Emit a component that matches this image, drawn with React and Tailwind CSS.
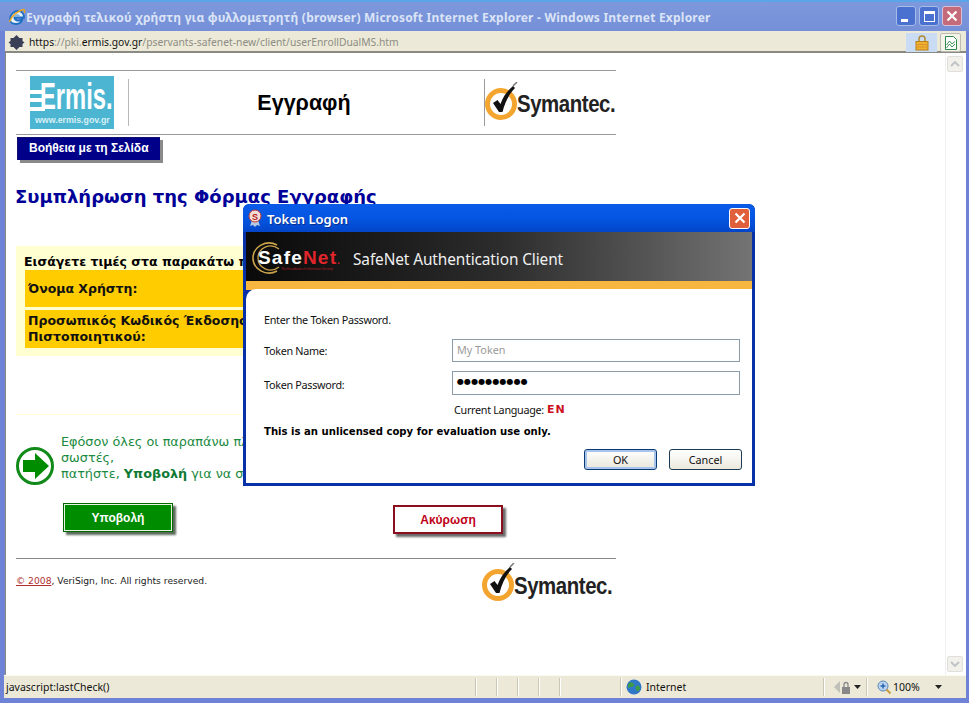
import React from "react";

const ui = { fontFamily: '"Noto Sans", "Liberation Sans", sans-serif' };
const arial = { fontFamily: '"Liberation Sans", Arial, sans-serif' };
const dejavu = { fontFamily: '"DejaVu Sans", Verdana, sans-serif' };

function IeIcon() {
  return (
    <svg width="18" height="18" viewBox="0 0 18 18" fill="none">
      <path d="M2 11.500C2 6 6.500 3 10 3c3.500 0 6 2.500 6 6.500H6.500c0 3 4.500 4.500 8 1.500-1 3.500-4 5-6.500 5-3.500 0-6-2-6-4.500Z" fill="#e8f2fb" stroke="#1f6fc4" strokeWidth="1.800" />
      <path d="M6.500 8h5.500c-.3-2.500-5-2.500-5.500 0Z" fill="#7cb3e6" />
      <path d="M1.500 14C3 8 10 2.500 15.500 1.500c1.500.2 1.500 2 .8 3.500" stroke="#e6a520" strokeWidth="1.400" />
    </svg>
  );
}

function Symantec() {
  return (
    <div className="flex items-center w-[131px] h-[38px] overflow-hidden" style={arial}>
      <svg width="38" height="38" viewBox="0 0 38 38" fill="none" className="shrink-0">
        <circle cx="16" cy="22" r="13.500" fill="#fff" stroke="#f4a52f" strokeWidth="5" />
        <path d="M8 21l4.500-3 3 4C18 15 22 9 28 4l2 2C24 12 20 20 17.500 30h-3.500Z" fill="#111" />
        <path d="M28 4l4-4" stroke="#777" strokeWidth="1.500" />
      </svg>
      <span className="-ml-[6px] mt-[7px] -tracking-[0.5px] font-bold text-[#222] whitespace-nowrap text-[24px] leading-none origin-left scale-x-[0.85]">
        Symantec.
      </span>
    </div>
  );
}

function ErmisLogo() {
  return (
    <div className="relative w-[84px] h-[53px] bg-[#4cb6d2] overflow-hidden text-white" style={arial}>
      <span className="absolute left-[10px] top-[7px] text-[36px] leading-[28px] font-bold origin-left scale-x-[0.66]">Ermis.</span>
      <span className="absolute left-0 top-[14px] w-[15px] h-[4px] bg-white" />
      <span className="absolute left-0 top-[22px] w-[15px] h-[4px] bg-white" />
      <span className="absolute left-0 top-[31px] w-[15px] h-[4px] bg-white" />
      <span className="absolute left-[5px] top-[38px] text-[8.800px] leading-[12px] font-bold whitespace-nowrap text-[#d6f0f6]">www.ermis.gov.gr</span>
    </div>
  );
}

function SafeNetLogo() {
  return (
    <div className="relative w-[90px] h-[36px]" style={arial}>
      <svg width="36" height="36" viewBox="0 0 36 36" fill="none" className="absolute left-0 top-0">
        <path d="M26 5C15 -1 2 7 2 18c0 11 13 19 24 13" stroke="#c9a24a" strokeWidth="1.600" />
        <path d="M28 9C19 2 7 8 7 18c0 10 12 16 21 9" stroke="#c9a24a" strokeWidth="1.300" />
      </svg>
      <span className="absolute left-[7px] top-[8px] text-[19px] leading-[20px] font-bold text-white whitespace-nowrap tracking-[1.200px]">Safe<span className="text-[#e0262c]">Net</span><span className="text-[9px] text-[#e0262c]">.</span></span>
      <span className="absolute left-[30px] top-[27px] text-[3px] leading-[4px] text-[#b02028] whitespace-nowrap">The Foundation of Information Security</span>
    </div>
  );
}

function Dialog() {
  return (
    <div className="absolute left-[243px] top-[151px] w-[512px] h-[282px] flex flex-col rounded-t-[6px] bg-[#0831a8] px-[3px] pb-[3px] overflow-hidden" style={ui}>
      <div className="h-[28px] -mx-[3px] px-[5px] flex items-center rounded-t-[6px] bg-gradient-to-b from-[#0a5be8] via-[#0456e2] to-[#0345c8] shrink-0">
        <svg width="14" height="18" viewBox="0 0 14 18" fill="none" className="mr-[5px]">
          <path d="M4 11l-2 6 3-1 2 2 2-2 3 1-2-6Z" fill="#b6c8e0" />
          <circle cx="7" cy="7" r="6" fill="#f2dcd6" stroke="#c2392e" />
          <text x="7" y="10.500" fontSize="9" fontWeight="700" fill="#b4231c" textAnchor="middle" style={arial}>S</text>
        </svg>
        <span className="pt-[3px] text-[13px] font-semibold text-white [text-shadow:1px_1px_0_#0a2f90]">Token Logon</span>
        <div className="ml-auto w-[21px] h-[21px] rounded-[3px] bg-[#e0603c] border border-white flex items-center justify-center">
          <svg width="12" height="12" viewBox="0 0 12 12"><path d="M1.500 1.500l9 9M10.500 1.500l-9 9" stroke="#fff" strokeWidth="2.200" /></svg>
        </div>
      </div>
      <div className="h-[49px] shrink-0 flex items-center pl-[5px] pt-[2px] bg-gradient-to-r from-[#0a0a0a] via-[#2c2c2c] to-[#747474]">
        <SafeNetLogo />
        <span className="ml-[12px] pt-[4px] text-[15.400px] text-[#f0f0f0] whitespace-nowrap -tracking-[0.1px]">SafeNet Authentication Client</span>
      </div>
      <div className="h-[9px] shrink-0 bg-[#f6b63f]" />
      <div className="flex-1 bg-white -mt-[1px] rounded-tl-[10px] pl-[18px] pr-[9px] relative text-[10.800px] text-[#111]">
        <div className="mt-[23px] leading-[16px] -tracking-[0.3px]">Enter the Token Password.</div>
        <div className="mt-[11px] flex items-center h-[23px]">
          <span className="w-[188px] -tracking-[0.3px] pt-[2px]">Token Name:</span>
          <div className="w-[288px] h-[23px] border border-[#8c9ba8] pl-[4px] text-[#9a9a9a] leading-[19px]">My Token</div>
        </div>
        <div className="mt-[9px] flex items-center h-[24px]">
          <span className="w-[188px] -tracking-[0.3px] pt-[4px]">Token Password:</span>
          <div className="w-[288px] h-[24px] border border-[#8c9ba8] pl-[4px] text-black text-[8px] leading-[20px] tracking-[0.1px] font-bold" style={dejavu}>●●●●●●●●●●</div>
        </div>
        <div className="mt-[7px] ml-[190px] h-[17px] flex items-center -tracking-[0.3px]">
          Current Language:
          <span className="ml-[3px] text-[11px] font-bold text-[#cc1122] tracking-[1px]" style={dejavu}>EN</span>
        </div>
        <div className="mt-[5px] text-[10.100px] font-bold text-black leading-[16px]" style={dejavu}>
          This is an unlicensed copy for evaluation use only.
        </div>
        <div className="mt-[9px] flex justify-end gap-[12px] mr-[1px]">
          <div className="w-[73px] h-[21px] rounded-[3px] border border-[#0a3a72] bg-gradient-to-b from-white to-[#e8e6da] shadow-[inset_0_0_0_2px_#a8c4ec] flex items-center justify-center pt-[1px]">OK</div>
          <div className="w-[73px] h-[21px] rounded-[3px] border border-[#1c3a52] bg-gradient-to-b from-white to-[#ebe9dd] flex items-center justify-center pt-[1px]">Cancel</div>
        </div>
      </div>
    </div>
  );
}

function PageContent() {
  return (
    <div className="w-[600px] ml-[10px] pt-[17px]">
      <div className="border-t border-b border-[#9a9a9a] h-[65px] flex items-center">
        <div className="ml-[14px] shrink-0"><ErmisLogo /></div>
        <div className="ml-[14px] h-[47px] w-px bg-[#b8b8b8] shrink-0" />
        <div className="w-[355px] shrink-0 text-center pr-[5px] text-[21.500px] font-bold text-black leading-[26px]" style={arial}>Εγγραφή</div>
        <div className="h-[47px] w-px bg-[#9a9a9a] shrink-0" />
        <div className="-mt-[4px] shrink-0"><Symantec /></div>
      </div>
      <div className="mt-[2px] ml-px w-[143px] h-[23px] bg-[#000088] border-t border-l border-[#101070] shadow-[3px_3px_0_#8a8a8a] flex items-center pl-[11px] pb-[3px] text-white text-[12px] font-bold" style={arial}>Βοήθεια με τη Σελίδα</div>
      <h1 className="mt-[25px] text-[18px] leading-[24px] font-bold text-[#000099] whitespace-nowrap -ml-px" style={dejavu}>Συμπλήρωση της Φόρμας Εγγραφής</h1>
      <div className="mt-[37px] h-[110px] bg-[#ffffd2] px-[8px] pt-[8px]" style={dejavu}>
        <div className="text-[12.500px] leading-[15px] font-bold text-black whitespace-nowrap">Εισάγετε τιμές στα παρακάτω πεδία</div>
        <div className="mt-[1px] ml-px h-[37px] bg-[#ffcc00] flex items-center pl-[3px] pt-[2px] text-[12.500px] font-bold text-[#111]">Όνομα Χρήστη:</div>
        <div className="mt-[3px] ml-px h-[38px] bg-[#ffcc00] flex items-center pl-[3px] text-[12.500px] leading-[16px] font-bold text-[#111]">
          <span>Προσωπικός Κωδικός Έκδοσης<br />Πιστοποιητικού:</span>
        </div>
      </div>
      <div className="mt-[58px] h-px bg-[#ffffd8]" />
      <div className="mt-[15px] flex items-center" style={dejavu}>
        <svg width="38" height="38" viewBox="0 0 38 38" fill="none" className="shrink-0 mt-[17px]">
          <circle cx="19" cy="19" r="17.500" fill="#fff" stroke="#118a1a" strokeWidth="3" />
          <path d="M7 13h12V6l14 13-14 13v-7H7Z" fill="#008c00" />
        </svg>
        <div className="ml-[7px] text-[12.800px] leading-[16px] text-[#1a8a3e]">
          Εφόσον όλες οι παραπάνω πληροφορίες<br />σωστές,<br />πατήστε, <b className="text-[#0d7a33]">Υποβολή</b> για να συνεχίσετε
        </div>
      </div>
      <div className="relative h-[31px] mt-[18px]" style={arial}>
        <div className="absolute left-[47px] top-0 w-[110px] h-[29px] bg-[#008c00] border border-[#006a00] shadow-[inset_0_0_0_1px_#e8f4e0,3px_3px_2px_#5a6a5a] flex items-center justify-center text-white text-[12px] font-bold">Υποβολή</div>
        <div className="absolute left-[377px] top-[2px] w-[110px] h-[29px] bg-white border-2 border-[#8a1020] shadow-[3px_3px_2px_#6a6a6a] flex items-center justify-center text-[#c00018] text-[12px] font-bold">Ακύρωση</div>
      </div>
      <div className="mt-[24px] border-t border-[#8a8a8a] flex items-start justify-between h-[44px]">
        <div className="mt-[16px] text-[9.200px] leading-[12px] text-[#222]" style={dejavu}>
          <span className="text-[#b03030] underline">© 2008</span>, VeriSign, Inc. All rights reserved.
        </div>
        <div className="mt-[4px] mr-[3px]"><Symantec /></div>
      </div>
    </div>
  );
}

function Scrollbar() {
  return (
    <div className="w-[21px] shrink-0 bg-white border-l border-[#f0f0f0] flex flex-col justify-between items-center py-[3px] pr-[2px]">
      <div className="w-[16px] h-[16px] rounded-[2px] bg-[#f2f1ec] border border-[#dfdfdc] flex items-center justify-center">
        <svg width="10" height="6" viewBox="0 0 10 6" fill="none"><path d="M1 5l4-4 4 4" stroke="#bfc2c6" strokeWidth="1.800" /></svg>
      </div>
      <div className="w-[16px] h-[16px] rounded-[2px] bg-[#f2f1ec] border border-[#dfdfdc] flex items-center justify-center">
        <svg width="10" height="6" viewBox="0 0 10 6" fill="none"><path d="M1 1l4 4 4-4" stroke="#bfc2c6" strokeWidth="1.800" /></svg>
      </div>
    </div>
  );
}

function Sep() {
  return <div className="h-[18px] w-px bg-[#c9c6b4] border-r border-white box-content" />;
}

export default function App() {
  return (
    <div className="w-[969px] h-[703px] flex flex-col overflow-hidden bg-[#6e82d6]" style={ui}>
      <div className="h-[31px] shrink-0 flex items-center pl-[8px] pr-[6px] border-t-2 border-[#5aa5e8] bg-gradient-to-b from-[#7e98dc] to-[#7590d8]">
        <IeIcon />
        <span className="ml-0 pt-[2px] text-[12px] font-bold text-[#dbe4f6] whitespace-nowrap tracking-[0.22px]">Εγγραφή τελικού χρήστη για φυλλομετρητή (browser) Microsoft Internet Explorer - Windows Internet Explorer</span>
        <div className="ml-auto mr-px flex gap-[3px] -mt-[1px]">
          <div className="w-[20px] h-[20px] rounded-[3px] bg-[#4a70d0] border border-[#a8bce8] flex items-end pl-[4px] pb-[3px]"><span className="block w-[7px] h-[3px] bg-white" /></div>
          <div className="w-[20px] h-[20px] rounded-[3px] bg-[#4a70d0] border border-[#a8bce8] flex items-center justify-center"><span className="block w-[11px] h-[11px] border border-t-[3px] border-white" /></div>
          <div className="w-[20px] h-[20px] rounded-[3px] bg-[#c46a78] border border-[#d8c0d8] flex items-center justify-center">
            <svg width="12" height="12" viewBox="0 0 12 12"><path d="M1.500 1.500l9 9M10.500 1.500l-9 9" stroke="#fff" strokeWidth="2.200" /></svg>
          </div>
        </div>
      </div>

      <div className="flex-1 min-h-0 flex flex-col mx-[5px] mr-[3px]">
        <div className="h-[22px] shrink-0 bg-[#ece9d8] border-b-2 border-[#8a8a84] flex items-center pl-[3px] pt-[3px]">
          <svg width="17" height="17" viewBox="0 0 17 17" className="shrink-0"><path d="M8.500 1l3 3h3v3l2 1.500-2 1.500v3h-3l-3 3-3-3h-3v-3L.5 8.500l2-1.500V4h3Z" fill="#3a3f58" /></svg>
          <span className="ml-[4px] text-[10.300px] text-[#111] whitespace-nowrap">https<span className="text-[#8d8d84]">://pki.</span>ermis.gov.gr<span className="text-[#8d8d84]">/pservants-safenet-new/client/userEnrollDualMS.htm</span></span>
          <div className="ml-auto h-[19px] w-[31px] bg-[#c9dcf3] flex items-center justify-center">
            <svg width="14" height="17" viewBox="0 0 14 17" fill="none">
              <path d="M4 8V5a3 3 0 0 1 6 0v3" stroke="#b08a30" strokeWidth="1.500" />
              <rect x="1" y="7.500" width="12" height="8.500" fill="#f0b030" stroke="#b87f18" />
              <path d="M1 10.500h12M1 13h12" stroke="#d8942a" />
            </svg>
          </div>
          <div className="ml-[3px] mr-[5px] w-[21px] h-[19px] rounded-[2px] border border-[#bcbcb0] bg-[#f4f3ea] flex items-center justify-center">
            <svg width="12" height="14" viewBox="0 0 12 14" fill="none">
              <path d="M.5.5h8l3 3v10H.5Z" fill="#fff" stroke="#2f8a4a" />
              <path d="M1.500 9l3-4 2.500 3 3-2.500M1.500 12l3-4 2.500 3 3-3" stroke="#2f8a4a" strokeWidth=".9" />
            </svg>
          </div>
        </div>

        <div className="flex-1 min-h-0 flex bg-white relative border-l-[1px] border-[#8a8a84]">
          <div className="flex-1 min-w-0 relative">
            <PageContent />
          </div>
          <Scrollbar />
          <div className="absolute left-[-6px] top-0"><Dialog /></div>
        </div>

        <div className="h-[23px] shrink-0 -ml-px bg-[#ece9d8] border-t border-[#fbfaf3] shadow-[0_-1px_0_#a0a098] flex items-center text-[#111] text-[10.500px]">
          <span className="w-[471px] pl-[2px] pt-[2px] whitespace-nowrap">javascript:lastCheck()</span>
          <div className="w-[21px]"><Sep /></div>
          <div className="w-[21px]"><Sep /></div>
          <div className="w-[21px]"><Sep /></div>
          <div className="w-[21px]"><Sep /></div>
          <div className="w-[61px]"><Sep /></div>
          <Sep />
          <svg width="16" height="16" viewBox="0 0 16 16" className="ml-[4px]">
            <circle cx="8" cy="8" r="7.500" fill="#2f78c8" />
            <path d="M3 4c3-2 4 0 5 1s-1 3-3 3-3 2-3 0 0-3 1-4ZM10 7c2-1 4 0 4 2s-2 4-3 3-2-4-1-5Z" fill="#3d9a4a" />
          </svg>
          <span className="ml-[4px] w-[177px] pt-[1px]">Internet</span>
          <Sep />
          <svg width="20" height="16" viewBox="0 0 20 16" fill="none" className="ml-[8px]">
            <path d="M1 8l6-6v12Z" fill="#c0c0b8" />
            <rect x="9" y="8" width="8" height="7" fill="#888" />
            <path d="M11 8V5.500a2 2 0 0 1 4 0V8" stroke="#888" strokeWidth="1.300" />
          </svg>
          <svg width="7" height="4" viewBox="0 0 7 4" className="ml-[1px]"><path d="M0 0h7L3.500 4Z" fill="#222" /></svg>
          <div className="ml-[5px]"><Sep /></div>
          <svg width="15" height="15" viewBox="0 0 15 15" fill="none" className="ml-[9px]">
            <circle cx="6" cy="6" r="5" fill="#bcd6f2" stroke="#5c86b6" />
            <path d="M6 3.500v5M3.500 6h5" stroke="#2a66b0" strokeWidth="1.500" />
            <path d="M9.500 9.500l4 4" stroke="#c79a3c" strokeWidth="2" />
          </svg>
          <span className="ml-[1px] pt-[1px]">100%</span>
          <svg width="7" height="4" viewBox="0 0 7 4" className="ml-[15px]"><path d="M0 0h7L3.500 4Z" fill="#222" /></svg>
        </div>
      </div>
      <div className="h-[5px] shrink-0" />
    </div>
  );
}
